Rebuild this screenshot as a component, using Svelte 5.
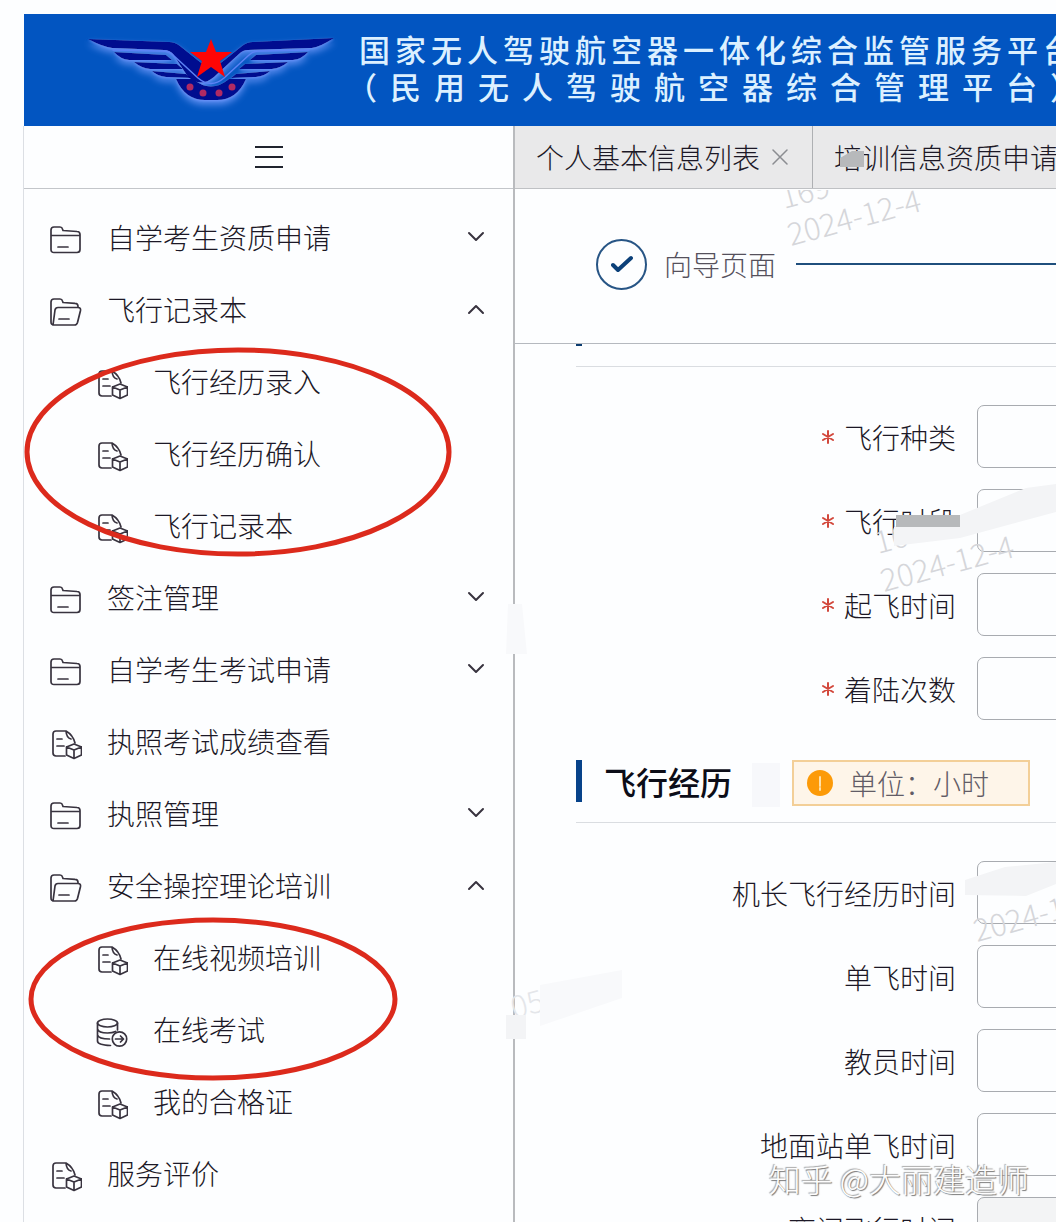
<script>
  const menu = [
    { label: '自学考生资质申请', icon: 'folder', arrow: 'down' },
    {
      label: '飞行记录本',
      icon: 'open',
      arrow: 'up',
      children: [
        { label: '飞行经历录入', icon: 'doc' },
        { label: '飞行经历确认', icon: 'doc' },
        { label: '飞行记录本', icon: 'doc' },
      ],
    },
    { label: '签注管理', icon: 'folder', arrow: 'down' },
    { label: '自学考生考试申请', icon: 'folder', arrow: 'down' },
    { label: '执照考试成绩查看', icon: 'doc' },
    { label: '执照管理', icon: 'folder', arrow: 'down' },
    {
      label: '安全操控理论培训',
      icon: 'open',
      arrow: 'up',
      children: [
        { label: '在线视频培训', icon: 'doc' },
        { label: '在线考试', icon: 'exam' },
        { label: '我的合格证', icon: 'doc' },
      ],
    },
    { label: '服务评价', icon: 'doc' },
  ]

  const basics = ['飞行种类', '飞行时段', '起飞时间', '着陆次数']
  const hours = ['机长飞行经历时间', '单飞时间', '教员时间', '地面站单飞时间', '夜间飞行时间']
</script>

{#snippet glyph(name)}
  <svg class="icon" viewBox="0 0 32 32" aria-hidden="true">
    {#if name === 'folder'}
      <path d="M1 5q0-3 3-3h6q2 0 2.500 2l.5 1.500 14 1q3 0 3 3v15q0 3-3 3H4q-3 0-3-3zM1 10.500h29M8 22h10" />
    {:else if name === 'open'}
      <path d="M4 28q-3 0-3-3V5q0-3 3-3h6q2 0 2.500 2l.5 1.500 12 .8q3 0 3 3v1.200M3 28l2-15q.5-2.500 3-2.500h20q3 0 2.500 3l-3 12q-.7 2.500-3 2.500zM9 22h10" />
    {:else if name === 'exam'}
      <ellipse cx="11.500" cy="6" rx="10" ry="4" />
      <path d="M1.500 6v18q0 4 13 4.500M21.500 6v7M1.500 12q1 4 10 4 5 0 8-1.500M1.500 18q1 4 12 4" />
      <circle cx="23.500" cy="22" r="7.200" />
      <path d="M19.500 22h8m-3-3 3 3-3 3" />
    {:else}
      <path d="M15 27H6q-3 0-3-3V5q0-3 3-3h10q7 4 9 12M16 2q.5 7 5 8M7 10h5M7 17h7" />
      <path d="m24 15 7.500 3v8L24 29.500 16.500 26v-8zM16.500 18l7.500 3 7.500-3M24 21v8.500" />
    {/if}
  </svg>
{/snippet}

{#snippet entry(item)}
  <button class="entry" aria-expanded={item.arrow ? item.arrow === 'up' : undefined}>
    {@render glyph(item.icon)}
    <span>{item.label}</span>
    {#if item.arrow}
      <svg class="arrow" viewBox="0 0 18 18" aria-hidden="true">
        <path d={item.arrow === 'up' ? 'M2 13l7-7 7 7' : 'M2 5l7 7 7-7'} />
      </svg>
    {/if}
  </button>
{/snippet}

{#snippet field(id, label, required)}
  <div class="field">
    <label for={id}>
      {#if required}
        <svg class="star" viewBox="0 0 12 14" aria-hidden="true"><path d="M6 1v12M1 4l10 6M11 4 1 10" /></svg>
      {/if}
      {label}
    </label>
    <input {id} type="text" />
  </div>
{/snippet}

<div class="page">
  <header>
    <svg class="logo" viewBox="0 0 264 84" aria-hidden="true">
      <defs>
        <filter id="glow" x="-10%" y="-20%" width="120%" height="160%">
          <feDropShadow dx="0" dy="1" stdDeviation="1" flood-color="#6f94ff" flood-opacity="0.8" />
          <feDropShadow dx="0" dy="4" stdDeviation="3" flood-color="#7ba0ff" flood-opacity="0.7" />
        </filter>
      </defs>
      <g filter="url(#glow)" fill="#00078f">
        <path d="M9 9 90 12q6 0 11 4l20 16q11 8 22 0l20-16q5-4 11-4l81-4q-14 9-22 10l-64 2q-5 0-9 4l-25 23q-13 11-26 0L94 24q-4-4-9-4l-52-2q-9-1-24-9z" />
        <path d="M35 22l52 3 6 5-43 0q-9-1-15-8zM55 32l43 2 6 5-33 0q-9-1-16-7zM73 41l34 3 5 4-25-1q-9-1-14-6z" />
        <path d="M229 22l-52 3-6 5 43 0q9-1 15-8zM209 32l-43 2-6 5 33 0q9-1 16-7zM191 41l-34 3-5 4 25-1q9-1 14-6z" />
        <path d="M97 49h17q18 15 36 0h17q-9 21-29 21h-12q-20 0-29-21z" />
      </g>
      <path d="M34 20l50 1q6 0 10 4l25 23q13 11 26 0l25-23q4-4 10-4l50-1" fill="none" stroke="#5c82f6" stroke-width="1.500" />
      <path d="m132 9 5 13h16l-12 9 5 16-14-10-14 10 5-16-12-9h16z" fill="#ff0505" />
      <g fill="#b02a63">
        <circle cx="111" cy="57" r="3.500" /><circle cx="124" cy="63" r="3.500" />
        <circle cx="140" cy="63" r="3.500" /><circle cx="153" cy="57" r="3.500" />
      </g>
    </svg>
    <h1>
      <span>国家无人驾驶航空器一体化综合监管服务平台</span>
      <span class="wide">（民用无人驾驶航空器综合管理平台）</span>
    </h1>
  </header>

  <div class="body">
    <aside>
      <button class="toggle" aria-label="菜单"><i></i><i></i><i></i></button>
      <nav>
        {#each menu as item}
          {@render entry(item)}
          {#if item.children}
            <div class="sub">
              {#each item.children as child}
                {@render entry(child)}
              {/each}
            </div>
          {/if}
        {/each}
      </nav>
    </aside>

    <main>
      <div class="tabs">
        <div class="tab">
          <a href="#info">个人基本信息列表</a>
          <button class="close" aria-label="关闭">
            <svg viewBox="0 0 16 16" aria-hidden="true"><path d="M1 1l14 14M15 1 1 15" /></svg>
          </button>
        </div>
        <div class="tab second"><a href="#training">培训信息资质申请</a></div>
      </div>

      <div class="steps">
        <span class="check">
          <svg viewBox="0 0 22 18" aria-hidden="true"><path d="m2 10 5 5L20 3" /></svg>
        </span>
        <span class="step">向导页面</span>
        <i class="rail"></i>
      </div>

      <form>
        <div class="head cut"></div>
        <div class="fields">
          {#each basics as label, i}
            {@render field(`basic-${i}`, label, true)}
          {/each}
        </div>
        <div class="head">
          <h2>飞行经历</h2>
          <span class="smudge"></span>
          <p class="unit">
            <svg viewBox="0 0 26 26" aria-hidden="true">
              <circle cx="13" cy="13" r="13" /><path d="M13 7v9M13 18v2" />
            </svg>
            单位：小时
          </p>
        </div>
        <div class="fields">
          {#each hours as label, i}
            {@render field(`hours-${i}`, label, false)}
          {/each}
        </div>
      </form>
    </main>
  </div>

  <!-- watermarks, masked numbers and hand-drawn rings lie over the page -->
  <svg class="overlay" width="1056" height="1222" aria-hidden="true">
    <clipPath id="under-tabs"><path d="M514 190h326v60H514z" /></clipPath>
    <g class="mark">
      <g clip-path="url(#under-tabs)"><text transform="translate(784 209) rotate(-15)">169</text></g>
      <text transform="translate(791 246) rotate(-15)">2024-12-4</text>
      <text transform="translate(878 554) rotate(-15)">16</text>
      <text transform="translate(884 592) rotate(-15)">2024-12-4</text>
      <text transform="translate(977 942) rotate(-15)">2024-12-4</text>
      <text class="faint" transform="translate(514 1019) rotate(-15)">05</text>
    </g>
    <path class="haze" d="M894 527l66-12 66-27 30-4v28l-96 26-66 8zM965 880l40-13 51-5v22l-30 12-61-1z" />
    <path class="haze soft" d="M508 604h14l5 50h-21zM540 985l82-15v28l-82 28z" />
    <path class="block" d="M840 158l12-7h12v16h-24zM896 515h64v12h-64z" />
    <path class="haze" d="M506 1015h20v24h-20z" />
    <ellipse class="ring" cx="238" cy="452" rx="211" ry="102" />
    <ellipse class="ring" cx="213" cy="999" rx="182" ry="79" />
  </svg>
  <p class="credit">知乎 @大丽建造师</p>
</div>

<style>
  :global(body) { margin: 0; }

  .page {
    position: relative;
    box-sizing: border-box;
    height: 100vh;
    padding: 14px 0 0 24px;
    overflow: hidden;
    display: flex;
    flex-direction: column;
    background: #fdfeff;
    color: #1c1826;
    font-family: "Noto Sans CJK SC", sans-serif;
    font-size: 28px;
    font-weight: 300;
    line-height: 36px;
  }

  button, input { font: inherit; color: inherit; }
  button { padding: 0; border: 0; background: none; }
  a { color: inherit; text-decoration: none; }
  svg { flex: none; fill: none; stroke-linecap: round; stroke-linejoin: round; }

  header {
    display: flex;
    flex: none;
    height: 112px;
    overflow: hidden;
    background: #0255c1;
    white-space: nowrap;
  }

  .logo { width: 264px; height: 84px; margin: 16px 0 0 55px; }

  h1 {
    display: flex;
    flex-direction: column;
    margin: 16px 0 0 16px;
    color: #dcf0ff;
    font-size: 31px;
    font-weight: 500;
    line-height: 37px;
    letter-spacing: 5px;
  }
  .wide { margin-left: -13px; letter-spacing: 13px; }

  .body { display: flex; flex: 1; min-height: 0; }

  aside {
    flex: none;
    box-sizing: border-box;
    width: 492px;
    margin-left: -1px;
    border-left: 1px solid #dcdfe4;
    border-right: 2px solid #b9bbbe;
  }

  .toggle {
    display: flex;
    flex-direction: column;
    align-items: center;
    justify-content: center;
    gap: 8px;
    box-sizing: border-box;
    width: 100%;
    height: 63px;
    border-bottom: 1px solid #c3c6ca;
  }
  .toggle i { width: 28px; height: 2px; background: #20242e; }

  nav { padding-top: 12px; }

  .entry {
    display: flex;
    align-items: center;
    width: 100%;
    height: 72px;
    padding: 0 28px 0 26px;
    text-align: left;
  }
  .entry span { flex: 1; }
  .sub .entry { padding-left: 72px; }

  .icon { width: 32px; height: 32px; margin: 8px 25px 0 0; stroke: #38333f; stroke-width: 1.7; }
  .arrow { width: 18px; height: 18px; stroke: #38333f; stroke-width: 2; }

  main { flex: 1; min-width: 0; display: flex; flex-direction: column; }

  .tabs {
    display: flex;
    flex: none;
    box-sizing: border-box;
    height: 63px;
    overflow: hidden;
    border-bottom: 1px solid #bfc1c4;
    background: #e9e9ea;
    white-space: nowrap;
  }
  .tab {
    display: flex;
    flex: none;
    align-items: center;
    gap: 12px;
    padding: 0 24px 0 21px;
    border-right: 1px solid #aeb0b3;
  }
  .second { border: 0; }
  .close { display: flex; }
  .close svg { width: 16px; height: 16px; stroke: #8b8d92; stroke-width: 1.5; }

  .steps {
    display: flex;
    flex: none;
    align-items: center;
    box-sizing: border-box;
    height: 155px;
    padding: 0 0 4px 81px;
    border-bottom: 1px solid #b5b9bf;
  }
  .check {
    display: flex;
    align-items: center;
    justify-content: center;
    box-sizing: border-box;
    width: 51px;
    height: 51px;
    border: 2px solid #275585;
    border-radius: 50%;
  }
  .check svg { width: 22px; height: 18px; stroke: #0b4079; stroke-width: 4; }
  .step { margin: 0 20px 0 17px; color: #55515c; }
  .rail { flex: 1; height: 2px; background: #1f4f7d; }

  form { padding-left: 61px; }

  .head {
    display: flex;
    align-items: center;
    box-sizing: border-box;
    height: 84px;
    border-bottom: 1px solid #dadde1;
  }
  .cut { height: 23px; align-items: start; }
  .cut::before { width: 6px; height: 2px; background: #0b3c70; content: ''; }

  h2 {
    margin: 0;
    padding-left: 22px;
    border-left: 6px solid #07438a;
    color: #0c0d18;
    font-size: 32px;
    font-weight: 500;
    line-height: 42px;
  }
  .smudge { width: 28px; height: 44px; margin: 8px 12px 0 20px; background: #f7f8fb; }

  .unit {
    display: flex;
    align-items: center;
    gap: 16px;
    box-sizing: border-box;
    width: 238px;
    height: 46px;
    margin: 4px 0 0;
    padding-left: 13px;
    border: 2px solid #f3cf98;
    background: #fef5e9;
    color: #625c66;
  }
  .unit svg { width: 26px; height: 26px; }
  .unit circle { fill: #fc9a08; }
  .unit path { stroke: #ffe0a8; stroke-width: 2; }

  .fields {
    display: flex;
    flex-direction: column;
    gap: 21px;
    padding: 38px 0 19px;
  }

  .field { display: flex; gap: 21px; margin-right: -8px; }
  label {
    display: flex;
    align-items: center;
    justify-content: flex-end;
    gap: 10px;
    width: 380px;
  }
  .star { width: 12px; height: 14px; stroke: #d2483c; stroke-width: 2; }
  .field input {
    flex: 1;
    box-sizing: border-box;
    min-width: 0;
    height: 63px;
    border: 1px solid #a8abb0;
    border-radius: 7px;
    background: #fdfeff;
  }
  .field:nth-child(5) input { background: #f3f4f5; }

  .overlay { position: absolute; top: 0; left: 0; pointer-events: none; }
  .mark { fill: #d5d6da; font-family: "Noto Sans CJK SC", sans-serif; font-size: 31px; font-weight: 300; }
  .faint { fill: #e4e6ea; }
  .haze { fill: #f3f4f6; }
  .soft { fill: #f8f9fb; }
  .block { fill: #b7b9bb; }
  .ring { stroke: #dc2a1c; stroke-width: 5; }

  .credit {
    position: absolute;
    right: 27px;
    bottom: 26px;
    margin: 0;
    color: #fdfdfd;
    font-size: 32px;
    font-weight: 300;
    text-shadow: 1px 1px 1px #777, -1px -1px 1px #aaa;
  }
</style>
